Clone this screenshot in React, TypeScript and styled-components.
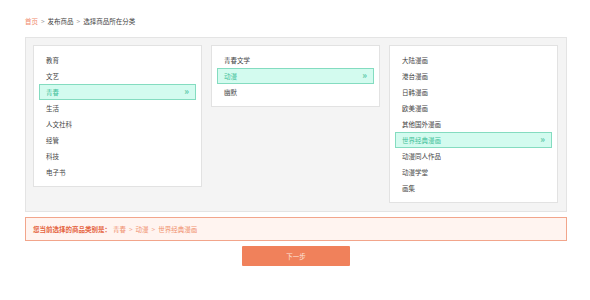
import React from 'react';
import styled, { createGlobalStyle } from 'styled-components';

const columns: { items: string[]; selected: string }[] = [
    {
        items: ['教育', '文艺', '青春', '生活', '人文社科', '经管', '科技', '电子书'],
        selected: '青春',
    },
    {
        items: ['青春文学', '动漫', '幽默'],
        selected: '动漫',
    },
    {
        items: [
            '大陆漫画',
            '港台漫画',
            '日韩漫画',
            '欧美漫画',
            '其他国外漫画',
            '世界经典漫画',
            '动漫同人作品',
            '动漫学堂',
            '画集',
        ],
        selected: '世界经典漫画',
    },
];

const path = columns.map(col => col.selected);

const App = () => (
    <>
        <GlobalStyle />
        <Page>
            <Breadcrumb>
                <Crumb $active>首页</Crumb>
                <Sep>&gt;</Sep>
                <Crumb>发布商品</Crumb>
                <Sep>&gt;</Sep>
                <Crumb>选择商品所在分类</Crumb>
            </Breadcrumb>
            <Chooser>
                {columns.map((col, i) => (
                    <Column key={i}>
                        {col.items.map(item => (
                            <Item key={item} $selected={item === col.selected}>
                                <span>{item}</span>
                                {item === col.selected && <Arrow>»</Arrow>}
                            </Item>
                        ))}
                    </Column>
                ))}
            </Chooser>
            <Result>
                <ResultLabel>您当前选择的商品类别是：</ResultLabel>
                {path.map((p, i) => (
                    <React.Fragment key={p}>
                        {i > 0 && <PathSep>&gt;</PathSep>}
                        <ResultPath>{p}</ResultPath>
                    </React.Fragment>
                ))}
            </Result>
            <NextButton>下一步</NextButton>
        </Page>
    </>
);

export default App;

const GlobalStyle = createGlobalStyle`
    body {
        margin: 0;
        background: #fff;
        font-family: "Noto Sans CJK SC", "Noto Sans", sans-serif;
    }
`;

const Page = styled.div`
    width: 542px;
    margin-left: 25px;
    padding-top: 14px;
`;

const Breadcrumb = styled.div`
    display: flex;
    align-items: center;
    height: 14px;
    margin-bottom: 9px;
    font-size: 6.5px;
    color: #666;
`;

const Crumb = styled.span<{ $active?: boolean }>`
    color: ${_ => (_.$active ? '#f0896a' : '#444')};
`;

const Sep = styled.span`
    margin: 0 3px;
    color: #999;
`;

const Chooser = styled.div`
    display: flex;
    align-items: flex-start;
    gap: 9px;
    padding: 7px 8px 8px 7px;
    border: 1px solid #e4e4e4;
    background: #f4f4f4;
`;

const Column = styled.div`
    width: 169px;
    box-sizing: border-box;
    padding: 6px 5px;
    border: 1px solid #e2e2e2;
    background: #fff;
`;

const Item = styled.div<{ $selected?: boolean }>`
    display: flex;
    justify-content: space-between;
    align-items: center;
    height: 16px;
    box-sizing: border-box;
    padding: 0 6px;
    border: 1px solid ${_ => (_.$selected ? '#84dcc0' : 'transparent')};
    background: ${_ => (_.$selected ? '#d3fbef' : 'transparent')};
    color: ${_ => (_.$selected ? '#3fbf98' : '#444')};
    font-size: 6.5px;
    line-height: 14px;
`;

const Arrow = styled.span`
    font-size: 9px;
    font-weight: bold;
    color: #5ccaa8;
`;

const Result = styled.div`
    display: flex;
    align-items: center;
    height: 24px;
    box-sizing: border-box;
    margin-top: 5px;
    padding-left: 7px;
    border: 1px solid #f2a58b;
    background: #fff4f0;
    font-size: 6.5px;
`;

const ResultLabel = styled.span`
    color: #e5643f;
    font-weight: bold;
    margin-right: 2px;
`;

const ResultPath = styled.span`
    color: #f0916f;
`;

const PathSep = styled.span`
    margin: 0 3px;
    color: #f2a58b;
`;

const NextButton = styled.button`
    display: block;
    width: 108px;
    height: 20px;
    margin: 5px auto 0;
    padding: 0;
    border: none;
    border-radius: 1px;
    background: #f0815b;
    color: #fde3da;
    font-family: "Noto Sans CJK SC", "Noto Sans", sans-serif;
    font-size: 6.5px;
`;
